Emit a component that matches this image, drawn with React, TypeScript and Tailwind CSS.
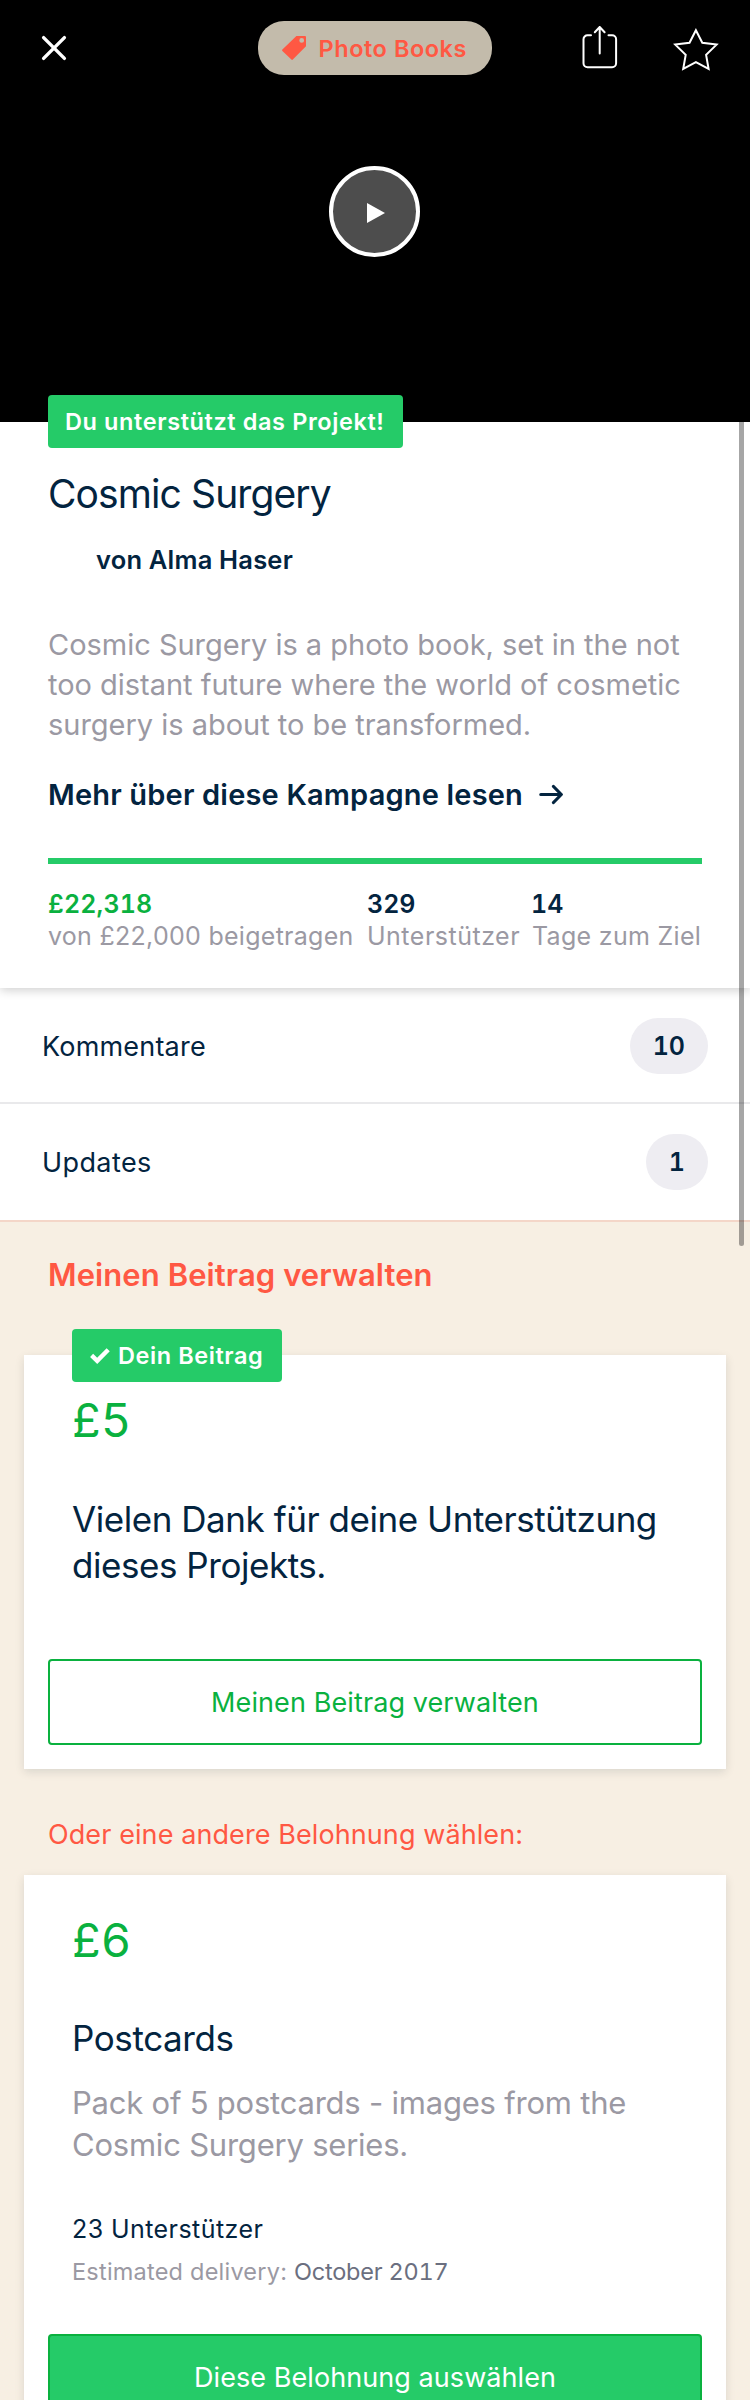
import type { ReactNode } from "react";

function CloseIcon() {
  return (
    <svg className="h-[26px] w-[26px]" viewBox="0 0 26 26" fill="none" stroke="#fff" strokeWidth="3.4" strokeLinecap="round">
      <path d="M2.6 2.6 23.4 23.4M23.4 2.6 2.6 23.4" />
    </svg>
  );
}

function TagIcon() {
  return (
    <svg className="h-6 w-6" viewBox="0 0 24 24" fill="#ff5843">
      <path
        fillRule="evenodd"
        d="M14.4 0H23a1 1 0 0 1 1 1v9.2L10.8 23.6a1 1 0 0 1-1.4 0L.4 15a1 1 0 0 1 0-1.4ZM19.7 2a2.4 2.4 0 1 0 0 4.8 2.4 2.4 0 0 0 0-4.8Z"
      />
    </svg>
  );
}

function ShareIcon() {
  return (
    <svg className="h-[44px] w-[36px]" viewBox="0 0 36 44" fill="none" stroke="#fff" strokeWidth="2" strokeLinecap="round" strokeLinejoin="round">
      <path d="M9 10.3H5.5a4 4 0 0 0-4 4v24a4 4 0 0 0 4 4h24.6a4 4 0 0 0 4-4v-24a4 4 0 0 0-4-4H26.5" />
      <path d="M17.7 28.5V2M12.8 7.2 17.7 2l4.9 5.2" />
    </svg>
  );
}

function StarIcon() {
  return (
    <svg className="h-[46px] w-[46px]" viewBox="0 0 46 46" fill="none" stroke="#fff" strokeWidth="2">
      <path d="M22.9 4.2 29.3 16.8 43.6 18.6 33.1 28.8 35.6 43 22.9 36.2 10.2 43 12.7 28.8 2.2 18.6 16.5 16.8Z" />
    </svg>
  );
}

function CheckIcon() {
  return (
    <svg className="h-4 w-5" viewBox="0 0 20 16" fill="none" stroke="#fff" strokeWidth="4.4">
      <path d="M1.6 7.4 7.2 12.8 18.2 1.8" />
    </svg>
  );
}

function CountRow({ label, count, className }: { label: string; count: string; className: string }) {
  return (
    <div className={`flex items-start justify-between pt-[30px] pr-[42px] pl-[42px] ${className}`}>
      <span className="text-[27px] leading-[57px]">{label}</span>
      <span className="h-[56px] rounded-full bg-[#eeedf2] px-[23px] text-[25px] leading-[56px] font-semibold tracking-normal tabular-nums">
        {count}
      </span>
    </div>
  );
}

function Card({ className, children }: { className: string; children: ReactNode }) {
  return (
    <div className={`mx-6 flex flex-col bg-white shadow-[0_3px_9px_rgba(0,30,40,0.12)] ${className}`}>{children}</div>
  );
}

export default function App() {
  return (
    <div className="relative h-[2400px] w-[750px] overflow-hidden bg-white font-['Inter',sans-serif] text-[#03243f]">
      <header className="flex h-[422px] flex-col bg-black">
        <div className="flex h-[75px] items-start pl-[41px]">
          <div className="pt-[35px]">
            <CloseIcon />
          </div>
          <div className="mt-[21px] ml-[191px] flex h-[54px] w-[234px] items-center gap-[12.5px] rounded-[26px] bg-[#c3bbab] pl-6 text-[23.5px] leading-[54px] font-semibold tracking-[0.54px] whitespace-nowrap text-[#ff5843]">
            <TagIcon />
            <span className="pt-px">Photo Books</span>
          </div>
          <div className="mt-[25px] ml-[90px]">
            <ShareIcon />
          </div>
          <div className="mt-[26px] ml-[55px]">
            <StarIcon />
          </div>
        </div>
        <div className="mt-[91px] ml-[329px] flex h-[91px] w-[91px] items-center justify-center rounded-full border-4 border-white bg-[#4d4d4d]">
          <svg className="mt-[3px] ml-[2px] h-5 w-[18px]" viewBox="0 0 18 20" fill="#fff">
            <path d="M0 0 18 10 0 20Z" />
          </svg>
        </div>
      </header>

      <div className="absolute top-[395px] left-[48px] z-10 h-[53px] w-[355px] rounded bg-[#25cb68] pl-[17px] text-[23.5px] leading-[53px] font-semibold tracking-[0.6px] whitespace-nowrap text-white">
        Du unterstützt das Projekt!
      </div>

      <section className="relative h-[566px] bg-white px-12 pt-12 whitespace-nowrap shadow-[0_2px_10px_rgba(0,0,0,0.2)] [clip-path:inset(0_0_-20px_0)]">
        <h1 className="text-[39px] leading-[48px] tracking-[-0.9px]">Cosmic Surgery</h1>
        <p className="mt-[26px] ml-12 text-[25.5px] leading-8 font-semibold tracking-[0.2px]">von Alma Haser</p>
        <p className="mt-[49px] text-[29px] leading-10 tracking-[-0.02px] text-[#9b99a3]">
          Cosmic Surgery is a photo book, set in the not
          <br />
          too distant future where the world of cosmetic
          <br />
          surgery is about to be transformed.
        </p>
        <p className="mt-[30px] flex items-center text-[29px] leading-10 font-semibold tracking-[0.18px]">
          Mehr über diese Kampagne lesen
          <svg className="ml-[16px] h-[22px] w-6" viewBox="0 0 24 22" fill="none" stroke="#03243f" strokeWidth="3.2" strokeLinecap="round" strokeLinejoin="round">
            <path d="M1.8 10.5H22M14.5 2.5 22.3 10.5 14.5 18.5" />
          </svg>
        </p>
        <div className="mt-[43px] h-[6px] bg-[#25cb68]" />
        <div className="mt-6 grid grid-cols-[319px_165px_auto] text-[25px] leading-8 text-[#9b99a3]">
          <div>
            <p className="font-semibold tracking-[0.15px] text-[#0ab13f] tabular-nums">£22,318</p>
            <p className="tracking-[0.28px]">von £22,000 beigetragen</p>
          </div>
          <div>
            <p className="font-semibold text-[#03243f] tabular-nums">329</p>
            <p className="tracking-[0.5px]">Unterstützer</p>
          </div>
          <div>
            <p className="-ml-px font-semibold text-[#03243f] tabular-nums">14</p>
            <p className="tracking-[0.3px]">Tage zum Ziel</p>
          </div>
        </div>
      </section>

      <CountRow label="Kommentare" count="10" className="h-[116px] border-b-2 border-[#e9e9eb] tracking-[0.2px]" />
      <CountRow label="Updates" count="1" className="h-[118px] border-b-2 border-[#f4d6c8] tracking-[0.4px]" />

      <main className="bg-[#f7efe3] pt-[33px] whitespace-nowrap">
        <h2 className="ml-12 text-[31px] leading-10 font-semibold tracking-[0.08px] text-[#ff5843]">
          Meinen Beitrag verwalten
        </h2>

        <Card className="relative mt-[60px] h-[414px] pt-[37px]">
          <div className="absolute -top-[26px] left-12 flex h-[53px] w-[210px] items-center gap-[8px] rounded bg-[#25cb68] pl-[18px] text-[23.5px] leading-[53px] font-semibold tracking-[0.57px] text-white">
            <CheckIcon />
            <span>Dein Beitrag</span>
          </div>
          <p className="ml-12 text-[47px] leading-[56px] text-[#0ab13f] tabular-nums">£5</p>
          <p className="mt-12 ml-12 text-[35px] leading-[46px] tracking-[-0.45px]">
            Vielen Dank für deine Unterstützung
            <br />
            dieses Projekts.
          </p>
          <button className="mx-6 mt-[71px] h-[86px] rounded border-2 border-[#0ab13f] pt-px text-[27px] leading-[81px] tracking-[0.1px] text-[#0ab13f]">
            Meinen Beitrag verwalten
          </button>
        </Card>

        <p className="mt-[48px] ml-12 text-[27px] leading-9 tracking-[0.09px] text-[#ff5843]">
          Oder eine andere Belohnung wählen:
        </p>

        <Card className="mt-[22px] pt-[37px] pb-6">
          <p className="ml-12 text-[47px] leading-[56px] text-[#0ab13f] tabular-nums">£6</p>
          <h3 className="mt-[47px] ml-12 text-[35px] leading-[46px] tracking-[-0.4px]">Postcards</h3>
          <p className="mt-[21px] ml-12 text-[31px] leading-[42px] tracking-[-0.22px] text-[#9b99a3]">
            Pack of 5 postcards - images from the
            <br />
            Cosmic Surgery series.
          </p>
          <p className="mt-[47px] ml-12 text-[25px] leading-8 tracking-[0.43px]">23 Unterstützer</p>
          <p className="mt-[11px] ml-12 text-[23.5px] leading-8 tracking-[0.22px] text-[#9b99a3]">
            Estimated delivery:{" "}
            <span className="tracking-[-0.22px] text-[#6b6f80] tabular-nums">October 2017</span>
          </p>
          <button className="mx-6 mt-[46px] h-[86px] rounded border-2 border-[#0ab13f] bg-[#25cb68] pt-px text-[27px] leading-[81px] tracking-[0.07px] text-white">
            Diese Belohnung auswählen
          </button>
        </Card>
      </main>

      <div className="absolute top-[422px] left-[739px] z-10 h-[824px] w-[5px] rounded-b-full bg-black/35" />
    </div>
  );
}
